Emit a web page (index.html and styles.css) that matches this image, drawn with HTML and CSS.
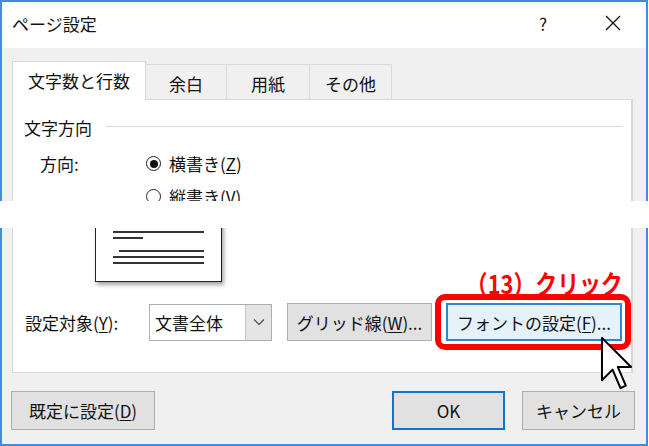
FILE: index.html
```html
<!DOCTYPE html>
<html lang="ja">
<head>
    <meta charset="UTF-8">
    <title>ページ設定</title>
    <link rel="stylesheet" href="styles.css">
</head>
<body>
<div class="janela">
    <div class="barra-titulo">
        <span class="titulo">ページ設定</span>
        <span class="ajuda">?</span>
        <span class="fechar">
            <svg width="16" height="16" viewBox="0 0 16 16"><path d="M1 1 L15 15 M15 1 L1 15" stroke="#111" stroke-width="1.3" fill="none"/></svg>
        </span>
    </div>

    <div class="corpo">
        <div class="abas">
            <div class="aba ativa">文字数と行数</div>
            <div class="aba aba-2">余白</div>
            <div class="aba aba-3">用紙</div>
            <div class="aba aba-4">その他</div>
        </div>

        <div class="painel">
            <div class="grupo">
                <span>文字方向</span>
                <div class="grupo-linha"></div>
            </div>
            <div class="linha-radio">
                <span class="rotulo">方向:</span>
                <span class="radio marcado"></span>
                <span>横書き(<u>Z</u>)</span>
            </div>
            <div class="linha-radio">
                <span class="rotulo"></span>
                <span class="radio"></span>
                <span>縦書き(<u>V</u>)</span>
            </div>
            <div class="linha-preview">
                <div class="pagina">
                    <div class="traco t1"></div>
                    <div class="traco t2"></div>
                    <div class="traco t3"></div>
                    <div class="traco t4"></div>
                    <div class="traco t5"></div>
                </div>
                <div class="anotacao">（13）クリック</div>
            </div>
            <div class="linha-aplicar">
                <span class="rotulo-aplicar">設定対象(<u>Y</u>):</span>
                <div class="combo">
                    <span class="combo-texto">文書全体</span>
                    <span class="combo-seta">
                        <svg width="12" height="8" viewBox="0 0 12 8"><path d="M1 1.5 L6 6.5 L11 1.5" stroke="#444" stroke-width="1.1" fill="none"/></svg>
                    </span>
                </div>
                <button class="botao botao-grade">グリッド線(<u>W</u>)...</button>
                <div class="destaque">
                    <button class="botao botao-fonte">フォントの設定(<u>F</u>)...</button>
                </div>
            </div>
        </div>

        <div class="rodape">
            <button class="botao botao-padrao">既定に設定(<u>D</u>)</button>
            <button class="botao botao-ok">OK</button>
            <button class="botao botao-cancelar">キャンセル</button>
        </div>
    </div>
</div>

<div class="rasgo"></div>

<svg class="cursor" width="36" height="57" viewBox="0 0 13.5 21.5">
    <path d="M0.7 0.7 V16.7 L4.7 12.7 L7.7 19.7 L9.7 18.7 L6.7 11.7 H11.7 Z" fill="#fff" stroke="#000" stroke-width="0.75" stroke-linejoin="round"/>
</svg>
</body>
</html>
```

FILE: styles.css
```css
* {
    box-sizing: border-box;
}
body {
    margin: 0;
    width: 649px;
    height: 446px;
    background-color: #ffffff;
    font-family: "Noto Sans CJK JP", "Noto Sans", sans-serif;
    font-size: 17px;
    color: #111;
    position: relative;
    overflow: hidden;
}
u {
    text-decoration-thickness: 1px;
    text-underline-offset: 2px;
}
.janela {
    width: 648px;
    height: 446px;
    border: 2px solid #3d8ee0;
    background-color: #f0f0f0;
    display: flex;
    flex-direction: column;
}
.barra-titulo {
    height: 46px;
    background-color: #ffffff;
    display: flex;
    align-items: center;
    padding-left: 10px;
    padding-bottom: 4px;
}
.titulo {
    flex: 1;
}
.ajuda {
    width: 20px;
    text-align: center;
    margin-right: 52px;
}
.fechar {
    display: flex;
    margin-right: 25px;
}

.corpo {
    flex: 1;
    padding: 13px 13px 0 10px;
    display: flex;
    flex-direction: column;
}
.abas {
    display: flex;
    align-items: flex-end;
    position: relative;
    z-index: 1;
    margin-bottom: -1px;
}
.aba {
    height: 36px;
    border: 1px solid #d9d9d9;
    border-bottom: none;
    border-left: none;
    display: flex;
    align-items: center;
    justify-content: center;
    padding-top: 2px;
}
.aba.ativa {
    height: 39px;
    width: 134px;
    background-color: #ffffff;
    border-left: 1px solid #d9d9d9;
    padding-top: 0;
    padding-bottom: 1px;
}
.aba-2 {
    width: 81px;
}
.aba-3 {
    width: 83px;
}
.aba-4 {
    width: 82px;
}

.painel {
    height: 274px;
    background-color: #ffffff;
    border: 1px solid #d9d9d9;
    border-right: 2px solid #d6d6d6;
    padding: 14px 0 0 11px;
    display: flex;
    flex-direction: column;
}
.grupo {
    height: 26px;
    display: flex;
    align-items: center;
    padding-right: 8px;
}
.grupo-linha {
    flex: 1;
    height: 1px;
    background-color: #d9d9d9;
    margin-left: 14px;
    margin-top: -2px;
}
.linha-radio {
    height: 33px;
    display: flex;
    align-items: center;
    padding-left: 16px;
}
.linha-radio:nth-child(2) {
    margin-top: 7px;
}
.rotulo {
    width: 106px;
}
.radio {
    width: 15px;
    height: 15px;
    border: 1.5px solid #222;
    border-radius: 50%;
    margin-right: 8px;
    display: flex;
    align-items: center;
    justify-content: center;
}
.radio.marcado::after {
    content: "";
    width: 8px;
    height: 8px;
    border-radius: 50%;
    background-color: #111;
}

.linha-preview {
    display: flex;
    align-items: flex-end;
    padding-left: 71px;
    margin-top: 2px;
}
.pagina {
    width: 127px;
    height: 67px;
    border: 1px solid #222;
    background-color: #ffffff;
    box-shadow: 2px 3px 4px rgba(0, 0, 0, 0.35);
    display: flex;
    flex-direction: column;
    padding-left: 17px;
}
.traco {
    height: 2px;
    background-color: #333;
    width: 91px;
}
.t1 {
    margin-top: 15px;
    height: 1.5px;
}
.t2 {
    width: 30px;
    margin-top: 4px;
}
.t3 {
    margin-top: 11px;
    margin-left: 6px;
    width: 85px;
}
.t4 {
    margin-top: 4px;
}
.t5 {
    margin-top: 4px;
}
.anotacao {
    margin-left: auto;
    margin-right: 8px;
    margin-bottom: -16px;
    color: #ff0000;
    font-weight: bold;
    font-size: 26px;
    line-height: 30px;
    transform: scaleX(0.84);
    transform-origin: right center;
    white-space: nowrap;
}

.linha-aplicar {
    display: flex;
    align-items: center;
    margin-top: 12px;
    padding-left: 1px;
}
.rotulo-aplicar {
    width: 124px;
}
.combo {
    width: 123px;
    height: 37px;
    border: 1px solid #adadad;
    display: flex;
    margin-right: 15px;
}
.combo-texto {
    flex: 1;
    padding-left: 5px;
    display: flex;
    align-items: center;
}
.combo-seta {
    width: 26px;
    background-color: #e5e5e5;
    border-left: 1px solid #c6c6c6;
    display: flex;
    align-items: center;
    justify-content: center;
}
.botao {
    font-family: inherit;
    font-size: 17px;
    color: #111;
    background-color: #e1e1e1;
    border: 1px solid #adadad;
    padding: 0;
    display: flex;
    align-items: center;
    justify-content: center;
}
.botao-grade {
    width: 145px;
    height: 38px;
    margin-right: 3px;
}
.destaque {
    border: 6px solid #ff0000;
    border-radius: 10px;
    padding: 3px 3px 3px 5px;
    background-color: #ffffff;
}
.botao-fonte {
    width: 176px;
    height: 38px;
    background-color: #e5f1fb;
    border: 2px solid #2f86d6;
}

.rodape {
    display: flex;
    align-items: center;
    margin-top: 18px;
    margin-left: -1px;
}
.botao-padrao {
    width: 144px;
    height: 39px;
}
.botao-ok {
    width: 113px;
    height: 39px;
    margin-left: auto;
    border: 2px solid #0a74d4;
}
.botao-cancelar {
    width: 113px;
    height: 39px;
    margin-left: 17px;
    margin-right: -2px;
}

.rasgo {
    position: absolute;
    left: 0;
    top: 201px;
    width: 649px;
    height: 27px;
    background-color: #ffffff;
}
.cursor {
    position: absolute;
    left: 600px;
    top: 336px;
}
```
